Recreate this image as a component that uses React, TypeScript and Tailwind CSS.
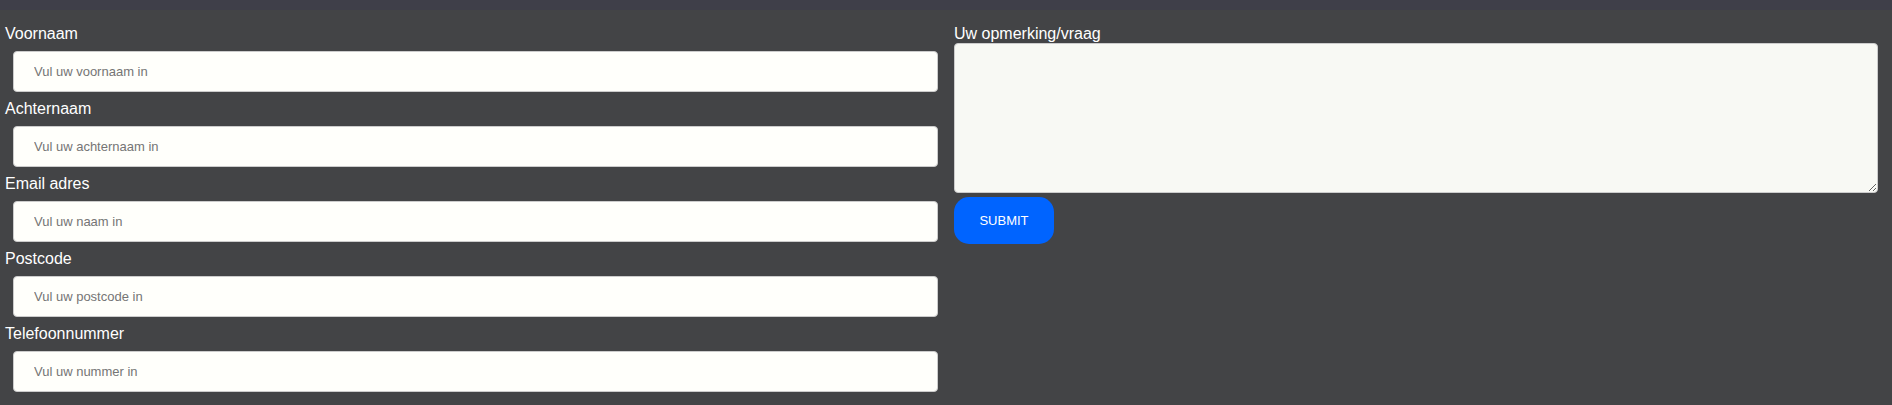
const fields = [
  { id: "voornaam", label: "Voornaam", placeholder: "Vul uw voornaam in", type: "text" },
  { id: "achternaam", label: "Achternaam", placeholder: "Vul uw achternaam in", type: "text" },
  { id: "email", label: "Email adres", placeholder: "Vul uw naam in", type: "email" },
  { id: "postcode", label: "Postcode", placeholder: "Vul uw postcode in", type: "text" },
  { id: "telefoon", label: "Telefoonnummer", placeholder: "Vul uw nummer in", type: "tel" },
];

export default function App() {
  return (
    <div className="min-h-screen bg-[#434446] font-['Liberation_Sans',Arial,sans-serif] text-base leading-[18px] text-white">
      <div className="h-[10px] bg-[#3f3f49]" />
      <form className="grid grid-cols-2 pt-[15px]" onSubmit={(e) => e.preventDefault()}>
        <div className="pl-[5px]">
          {fields.map((field) => (
            <div key={field.id} className="flex flex-col">
              <label htmlFor={field.id}>{field.label}</label>
              <input
                id={field.id}
                name={field.id}
                type={field.type}
                placeholder={field.placeholder}
                className="m-2 h-[41px] rounded border border-[#cccccc] bg-[#fffffb] px-5 text-[13px] text-black placeholder:text-[#757575]"
              />
            </div>
          ))}
        </div>
        <div className="flex flex-col items-start pr-[14px] pl-2">
          <label htmlFor="opmerking">Uw opmerking/vraag</label>
          <textarea
            id="opmerking"
            name="opmerking"
            className="h-[150px] w-full resize rounded border border-[#cccccc] bg-[#f8f9f4] px-5 py-3 text-[13px] text-black"
          />
          <button
            type="submit"
            className="mt-1 h-[47px] min-w-[100px] cursor-pointer rounded-[15px] bg-[#0064ff] px-6 text-[13px] text-white"
          >
            SUBMIT
          </button>
        </div>
      </form>
    </div>
  );
}
